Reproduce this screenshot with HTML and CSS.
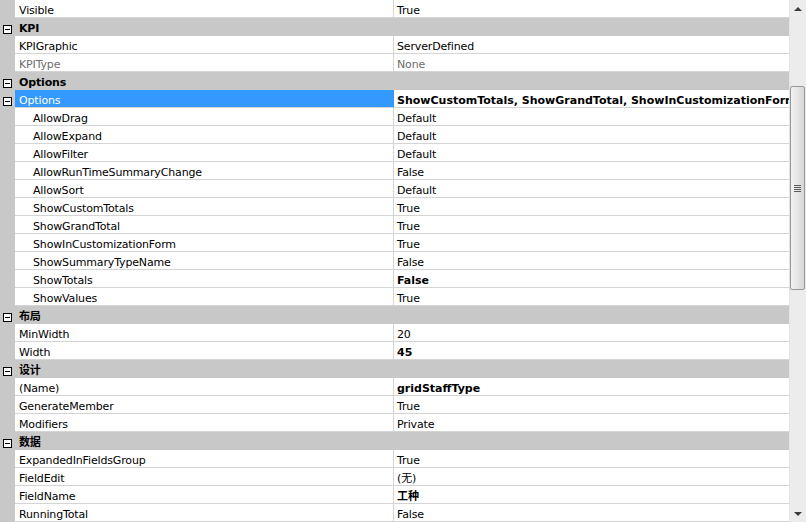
FILE: index.html
```html
<!DOCTYPE html>
<html>
<head>
<meta charset="utf-8">
<link rel="stylesheet" href="styles.css">
</head>
<body>
<div class="pg">
  <div class="grid">
    <div class="row"><div class="mg"></div><div class="name">Visible</div><div class="val">True</div></div>
    <div class="row cat"><div class="mg"><span class="box"></span></div><div class="cname">KPI</div></div>
    <div class="row"><div class="mg"></div><div class="name">KPIGraphic</div><div class="val">ServerDefined</div></div>
    <div class="row dis"><div class="mg"></div><div class="name">KPIType</div><div class="val">None</div></div>
    <div class="row cat"><div class="mg"><span class="box"></span></div><div class="cname">Options</div></div>
    <div class="row sel"><div class="mg"><span class="box"></span></div><div class="name">Options</div><div class="val b">ShowCustomTotals, ShowGrandTotal, ShowInCustomizationForm, ShowSummaryTypeName, ShowValues</div></div>
    <div class="row"><div class="mg"></div><div class="name sub">AllowDrag</div><div class="val">Default</div></div>
    <div class="row"><div class="mg"></div><div class="name sub">AllowExpand</div><div class="val">Default</div></div>
    <div class="row"><div class="mg"></div><div class="name sub">AllowFilter</div><div class="val">Default</div></div>
    <div class="row"><div class="mg"></div><div class="name sub">AllowRunTimeSummaryChange</div><div class="val">False</div></div>
    <div class="row"><div class="mg"></div><div class="name sub">AllowSort</div><div class="val">Default</div></div>
    <div class="row"><div class="mg"></div><div class="name sub">ShowCustomTotals</div><div class="val">True</div></div>
    <div class="row"><div class="mg"></div><div class="name sub">ShowGrandTotal</div><div class="val">True</div></div>
    <div class="row"><div class="mg"></div><div class="name sub">ShowInCustomizationForm</div><div class="val">True</div></div>
    <div class="row"><div class="mg"></div><div class="name sub">ShowSummaryTypeName</div><div class="val">False</div></div>
    <div class="row"><div class="mg"></div><div class="name sub">ShowTotals</div><div class="val b">False</div></div>
    <div class="row"><div class="mg"></div><div class="name sub">ShowValues</div><div class="val">True</div></div>
    <div class="row cat"><div class="mg"><span class="box"></span></div><div class="cname">布局</div></div>
    <div class="row"><div class="mg"></div><div class="name">MinWidth</div><div class="val">20</div></div>
    <div class="row"><div class="mg"></div><div class="name">Width</div><div class="val b">45</div></div>
    <div class="row cat"><div class="mg"><span class="box"></span></div><div class="cname">设计</div></div>
    <div class="row"><div class="mg"></div><div class="name">(Name)</div><div class="val b">gridStaffType</div></div>
    <div class="row"><div class="mg"></div><div class="name">GenerateMember</div><div class="val">True</div></div>
    <div class="row"><div class="mg"></div><div class="name">Modifiers</div><div class="val">Private</div></div>
    <div class="row cat"><div class="mg"><span class="box"></span></div><div class="cname">数据</div></div>
    <div class="row"><div class="mg"></div><div class="name">ExpandedInFieldsGroup</div><div class="val">True</div></div>
    <div class="row"><div class="mg"></div><div class="name">FieldEdit</div><div class="val">(无)</div></div>
    <div class="row"><div class="mg"></div><div class="name">FieldName</div><div class="val b">工种</div></div>
    <div class="row"><div class="mg"></div><div class="name">RunningTotal</div><div class="val">False</div></div>
  </div>
  <div class="sb">
    <div class="arrow up"></div>
    <div class="track">
      <div class="gap-top"></div>
      <div class="thumb"><span class="grip"></span></div>
    </div>
    <div class="arrow down"></div>
  </div>
</div>
</body>
</html>
```
FILE: styles.css
```css
html, body {
  margin: 0;
  padding: 0;
  background: #ffffff;
  overflow: hidden;
}
body {
  font-family: "DejaVu Sans", "Noto Sans CJK SC", sans-serif;
  font-size: 11px;
  letter-spacing: -0.15px;
  color: #000;
}
.pg {
  display: flex;
  width: 806px;
  height: 522px;
}
.grid {
  width: 789px;
  display: flex;
  flex-direction: column;
  overflow: hidden;
}
.row {
  display: flex;
  height: 18px;
  flex: none;
}
.mg {
  width: 15px;
  flex: none;
  background: #c8c8c8;
  display: flex;
  align-items: flex-start;
}
.box {
  box-sizing: border-box;
  width: 9px;
  height: 9px;
  margin-left: 3px;
  margin-top: 7px;
  border: 1px solid #000;
  background: #fff;
  display: flex;
  align-items: center;
  justify-content: center;
}
.box::after {
  content: "";
  width: 5px;
  height: 1px;
  background: #000;
}
.name, .val, .cname {
  box-sizing: border-box;
  height: 18px;
  padding-top: 4px;
  line-height: 13px;
  white-space: nowrap;
  overflow: hidden;
}
.name {
  width: 379px;
  flex: none;
  padding-left: 4px;
  border-bottom: 1px solid #d4d4d4;
  border-right: 1px solid #d4d4d4;
}
.name.sub {
  padding-left: 18px;
}
.val {
  flex: 1;
  min-width: 0;
  padding-left: 3px;
  border-bottom: 1px solid #d4d4d4;
}
.b {
  font-weight: bold;
  letter-spacing: 0;
}
.dis .name, .dis .val {
  color: #6d6d6d;
}
.sel .name {
  background: #3399ff;
  color: #fff;
  border-right-color: #3399ff;
}
.cat {
  background: #c8c8c8;
}
.cname {
  flex: 1;
  font-weight: bold;
  padding-left: 4px;
}
.sb {
  width: 17px;
  flex: none;
  background: #ececec;
  border-left: 1px solid #e4e4e4;
  box-sizing: border-box;
  display: flex;
  flex-direction: column;
}
.arrow {
  height: 17px;
  flex: none;
  display: flex;
  align-items: center;
  justify-content: center;
}
.arrow::after {
  content: "";
  width: 0;
  height: 0;
  border-left: 4px solid transparent;
  border-right: 4px solid transparent;
}
.up::after {
  border-bottom: 4px solid #3c3c3c;
}
.down::after {
  border-top: 4px solid #3c3c3c;
}
.track {
  flex: 1;
  display: flex;
  flex-direction: column;
}
.gap-top {
  height: 69px;
  flex: none;
}
.thumb {
  height: 204px;
  margin: 0 1px 0 0;
  box-sizing: border-box;
  border: 1px solid #979797;
  border-radius: 2px;
  background: linear-gradient(to right, #f2f2f2, #e6e6e6 50%, #d6d6d6);
  display: flex;
  align-items: center;
  justify-content: center;
}
.grip {
  width: 7px;
  height: 7px;
  background: repeating-linear-gradient(to bottom, #5a5a5a 0 1px, transparent 1px 2px);
}
```
